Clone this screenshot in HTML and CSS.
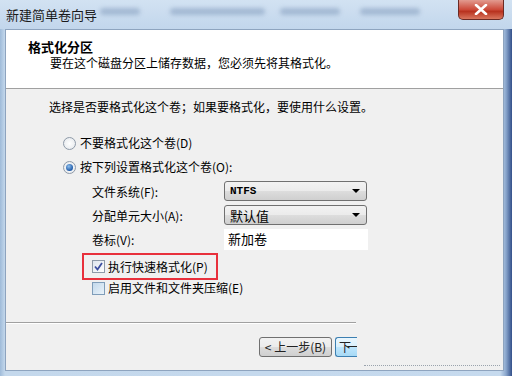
FILE: index.html
```html
<!DOCTYPE html>
<html>
	<head>
		<meta charset="utf-8" />
		<title>新建简单卷向导</title>
		<link rel="stylesheet" href="styles.css">
	</head>
	<body>
		<div id="win">
			<!--标题栏-->
			<div class="titlebar">
				<span class="caption">新建简单卷向导</span>
				<span class="blur b1"></span>
				<span class="blur b2"></span>
				<span class="blur b3"></span>
				<span class="blur b4"></span>
				<div class="close">
					<svg width="14" height="11" viewBox="0 0 14 11">
						<path d="M2 1 L12 10 M12 1 L2 10" stroke="#fff" stroke-width="2.6" stroke-linecap="round" fill="none"/>
					</svg>
				</div>
			</div>

			<div class="client">
				<div class="header">
					<div class="h-title">格式化分区</div>
					<div class="h-sub">要在这个磁盘分区上储存数据，您必须先将其格式化。</div>
				</div>

				<div class="main">
					<p class="intro">选择是否要格式化这个卷；如果要格式化，要使用什么设置。</p>

					<div class="opts">
						<label class="radio-row"><span class="radio"></span>不要格式化这个卷(D)</label>
						<label class="radio-row"><span class="radio on"></span>按下列设置格式化这个卷(O):</label>

						<div class="fields">
							<div class="field">
								<span class="lbl">文件系统(F):</span>
								<div class="select mono">NTFS<i class="arrow"></i></div>
							</div>
							<div class="field">
								<span class="lbl">分配单元大小(A):</span>
								<div class="select">默认值<i class="arrow"></i></div>
							</div>
							<div class="field">
								<span class="lbl">卷标(V):</span>
								<div class="input">新加卷</div>
							</div>
						</div>

						<div class="quick">
							<label class="check-row"><span class="check on">
								<svg width="9" height="9" viewBox="0 0 9 9"><path d="M1 4.5 L3.5 7.5 L8 1" stroke="#3c4fa0" stroke-width="1.8" fill="none"/></svg>
							</span>执行快速格式化(P)</label>
						</div>
						<label class="check-row compress"><span class="check"></span>启用文件和文件夹压缩(E)</label>
					</div>
				</div>

				<div class="footer">
					<div class="sep"></div>
					<div class="btns">
						<span class="btn">&lt; 上一步(B)</span>
						<span class="btn next">下一</span>
					</div>
					<div class="dots"></div>
				</div>
			</div>
		</div>
	</body>
</html>
```

FILE: styles.css
```css
*{
	padding: 0;
	margin: 0;
	box-sizing: border-box;
}
body{
	width: 512px;
	height: 376px;
	overflow: hidden;
	font-family: "Noto Sans CJK SC", "DejaVu Sans", sans-serif;
	font-size: 12px;
	color: #000;
	background: #b8cfe6;
}
#win{
	width: 512px;
	height: 376px;
	display: flex;
	flex-direction: column;
	background: linear-gradient(to right, #9fbbd9 0, #c4d8ec 5px, #c6daee 500px, #8aa6cc 506px, #33508a 512px);
}

/*标题栏*/
.titlebar{
	height: 29px;
	position: relative;
	display: flex;
	align-items: center;
	padding-left: 6px;
	background: linear-gradient(#d2e2f2, #c2d6ec);
}
.caption{
	font-size: 13px;
	color: #1a1a1a;
	position: relative;
	z-index: 1;
}
.blur{
	position: absolute;
	height: 7px;
	border-radius: 4px;
	background: rgba(90, 120, 160, .35);
	filter: blur(2px);
	top: 8px;
}
.b1{ left: 100px; width: 40px; }
.b2{ left: 170px; width: 95px; }
.b3{ left: 280px; width: 60px; }
.b4{ left: 360px; width: 60px; }
.close{
	position: absolute;
	left: 458px;
	top: 0;
	width: 46px;
	height: 20px;
	border: 1px solid #6b2a24;
	border-top: none;
	border-radius: 0 0 5px 5px;
	background: linear-gradient(#e29b90, #cc4a3a 50%, #b8321f 60%, #d9765e);
	display: flex;
	align-items: center;
	justify-content: center;
}

/*客户区*/
.client{
	flex: 1;
	margin: 0 8px 5px 5px;
	border: 1px solid #8ea4bf;
	background: #f0f0f0;
	display: flex;
	flex-direction: column;
}
.header{
	height: 59px;
	background: #fff;
	border-bottom: 1px solid #a0a0a0;
	padding: 9px 0 0 22px;
}
.h-title{
	font-weight: bold;
	font-size: 13px;
	line-height: 16px;
}
.h-sub{
	padding-left: 22px;
	line-height: 16px;
}
.main{
	flex: 1;
	padding: 10px 0 0 43px;
}
.intro{
	line-height: 16px;
}
.opts{
	padding: 16px 0 0 14px;
}
.radio-row, .check-row{
	display: flex;
	align-items: center;
	height: 24px;
	line-height: 16px;
}
.radio{
	width: 13px;
	height: 13px;
	border-radius: 50%;
	border: 1px solid #8e9aa8;
	background: radial-gradient(#fff, #e2e6ea);
	margin-right: 4px;
	display: flex;
	align-items: center;
	justify-content: center;
}
.radio.on::after{
	content: "";
	width: 7px;
	height: 7px;
	border-radius: 50%;
	background: radial-gradient(circle at 40% 35%, #8fc0ee, #1f5aa8 70%);
}
.fields{
	padding: 0 0 0 29px;
}
.field{
	display: flex;
	align-items: center;
	height: 24px;
}
.lbl{
	width: 132px;
}
.select{
	width: 143px;
	height: 20px;
	border: 1px solid #707070;
	border-radius: 3px;
	background: linear-gradient(#f2f2f2, #ebebeb 50%, #dddddd 51%, #cfcfcf);
	padding-left: 5px;
	display: flex;
	align-items: center;
	justify-content: space-between;
	font-size: 13px;
}
.mono{
	font-family: "Liberation Mono", monospace;
	font-size: 11px;
	font-weight: bold;
}
.arrow{
	width: 0;
	border: 4px solid transparent;
	border-top: 4px solid #000;
	border-bottom: none;
	margin-right: 6px;
}
.input{
	width: 144px;
	height: 21px;
	background: #fff;
	padding-left: 4px;
	line-height: 20px;
	font-size: 13px;
}
.quick{
	margin: 2px 0 0 19px;
	width: 136px;
	height: 27px;
	border: 2px solid #e8303c;
	padding-left: 8px;
}
.quick .check-row{
	height: 23px;
}
.check{
	width: 13px;
	height: 13px;
	border: 1px solid #8e9aa8;
	background: linear-gradient(135deg, #dfe6ee, #fdfdfd);
	margin-right: 3px;
	display: flex;
	align-items: center;
	justify-content: center;
}
.compress{
	margin-left: 29px;
	height: 16px;
}
.compress .check{
	background: linear-gradient(135deg, #c3d9ec, #e9f2f9);
	border-color: #7f9db9;
}

/*底部按钮*/
.footer{
	height: 48px;
	position: relative;
}
.sep{
	width: 350px;
	border-top: 1px solid #a0a0a0;
	border-bottom: 1px solid #fff;
}
.btns{
	display: flex;
	padding: 13px 0 0 253px;
	gap: 3px;
}
.btn{
	height: 20px;
	line-height: 18px;
	border: 1px solid #707070;
	border-radius: 3px;
	background: linear-gradient(#f2f2f2, #ebebeb 50%, #dddddd 51%, #cfcfcf);
	width: 73px;
	font-size: 12px;
	color: #222;
	text-align: center;
	white-space: nowrap;
}
.next{
	width: 22px;
	border-color: #3c7fb1;
	border-right: none;
	border-radius: 3px 0 0 3px;
	background: linear-gradient(#eaf6fd, #d9f0fc 50%, #bee6fd 51%, #a7d9f5);
	text-align: left;
	padding-left: 3px;
	letter-spacing: -4px;
	overflow: hidden;
}
.dots{
	position: absolute;
	left: 358px;
	bottom: 4px;
	width: 136px;
	border-top: 1px dotted #9aa3ad;
}
```
